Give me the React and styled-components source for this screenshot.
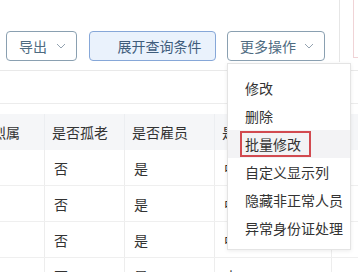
import React from "react";
import styled, { createGlobalStyle } from "styled-components";

const GlobalStyle = createGlobalStyle`
  html, body {
    margin: 0;
    padding: 0;
    background: #fff;
  }
  body {
    font-family: "Noto Sans CJK SC", "Noto Sans", sans-serif;
    font-size: 14px;
    color: #333;
  }
`;

const columns = [
  { title: "是否烈属", width: 88 },
  { title: "是否孤老", width: 80 },
  { title: "是否雇员", width: 90 },
  { title: "是否中共党员", width: 117 },
  { title: "", width: 40 },
];

const rows = [
  ["", "否", "是", "中", ""],
  ["", "否", "是", "中", ""],
  ["", "否", "是", "中", ""],
  ["", "否", "是", "中", ""],
];

const menuItems = [
  "修改",
  "删除",
  "批量修改",
  "自定义显示列",
  "隐藏非正常人员",
  "异常身份证处理",
];

const Chevron = () => (
  <svg width="10" height="6" viewBox="0 0 10 6">
    <path d="M1 1 L5 5 L9 1" fill="none" stroke="#93a2b0" strokeWidth="1" />
  </svg>
);

const App = () => {
  return (
    <Page>
      <GlobalStyle />
      <Toolbar>
        <Button $width={71}>
          导出
          <Chevron />
        </Button>
        <Button $width={127} $primary>
          展开查询条件
        </Button>
        <Button $width={98}>
          更多操作
          <Chevron />
        </Button>
        <Edge>
          <EdgeMark />
        </Edge>
      </Toolbar>
      <Divider />
      <Gap />
      <TableWrap>
        <Table>
          <HeaderRow>
            {columns.map((c, i) => (
              <HeadCell key={i} $width={c.width}>
                {c.title}
              </HeadCell>
            ))}
          </HeaderRow>
          {rows.map((r, ri) => (
            <Row key={ri}>
              {r.map((v, ci) => (
                <Cell key={ci} $width={columns[ci].width}>
                  {v}
                </Cell>
              ))}
            </Row>
          ))}
        </Table>
        <Menu>
          {menuItems.map((m, i) => (
            <MenuItem key={i} $active={i === 2}>
              {i === 2 ? <Marked>{m}</Marked> : m}
            </MenuItem>
          ))}
        </Menu>
      </TableWrap>
    </Page>
  );
};

export default App;

const Page = styled.div`
  width: 358px;
  height: 272px;
  overflow: hidden;
  position: relative;
  background: #fff;
`;

const Toolbar = styled.div`
  display: flex;
  align-items: flex-start;
  height: 70px;
  padding: 31px 0 0 6px;
  box-sizing: border-box;
  gap: 12px;
`;

const Button = styled.div`
  width: ${(p) => p.$width}px;
  height: 30px;
  box-sizing: border-box;
  border: 1px solid ${(p) => (p.$primary ? "#86a7d8" : "#8aa0b1")};
  background: ${(p) => (p.$primary ? "#eaf2fc" : "#fff")};
  border-radius: 4px;
  display: flex;
  align-items: center;
  justify-content: ${(p) => (p.$primary ? "center" : "space-between")};
  padding: ${(p) => (p.$primary ? "0 0 0 14px" : "0 10px 0 12px")};
  color: ${(p) => (p.$primary ? "#3f5d7c" : "#4e6b81")};
  font-size: 14px;
  line-height: 1;
  &:nth-child(3) {
    margin-left: -1px;
  }
`;

const Edge = styled.div`
  margin-left: auto;
  margin-top: -31px;
  width: 19px;
  height: 62px;
  border-left: 1px solid #e6e6e6;
  box-sizing: border-box;
  display: flex;
`;

const EdgeMark = styled.div`
  margin-left: 13px;
  width: 6px;
  height: 57px;
  border-left: 1px solid #f0d3d6;
  border-bottom: 1px solid #f0d3d6;
`;

const Divider = styled.div`
  height: 1px;
  background: #e9e9e9;
`;

const Gap = styled.div`
  height: 32px;
  border-bottom: 1px solid #ececec;
`;

const TableWrap = styled.div`
  position: relative;
  padding-top: 10px;
`;

const Table = styled.div`
  margin-left: -43px;
  display: flex;
  flex-direction: column;
`;

const HeaderRow = styled.div`
  display: flex;
  height: 36px;
  background: #f5f6f8;
`;

const HeadCell = styled.div`
  width: ${(p) => p.$width}px;
  flex-shrink: 0;
  box-sizing: border-box;
  padding-left: 7px;
  display: flex;
  align-items: center;
  border-right: 1px solid #eceef1;
  white-space: nowrap;
  overflow: hidden;
  color: #333;
`;

const Row = styled.div`
  display: flex;
  height: 36px;
  border-bottom: 1px solid #efefef;
  box-sizing: border-box;
`;

const Cell = styled.div`
  width: ${(p) => p.$width}px;
  flex-shrink: 0;
  box-sizing: border-box;
  padding-left: 9px;
  display: flex;
  align-items: center;
  border-right: 1px solid #ededed;
  white-space: nowrap;
  overflow: hidden;
  color: #333;
`;

const Menu = styled.div`
  position: absolute;
  left: 227px;
  top: -41px;
  width: 124px;
  box-sizing: border-box;
  padding: 10px 0 7px;
  background: #fff;
  border: 1px solid #e4e4e4;
  box-shadow: 0 1px 4px rgba(0, 0, 0, 0.08);
`;

const MenuItem = styled.div`
  height: 28px;
  display: flex;
  align-items: center;
  padding-left: 17px;
  background: ${(p) => (p.$active ? "#f3f3f5" : "transparent")};
  color: #333;
  white-space: nowrap;
`;

const Marked = styled.span`
  display: inline-flex;
  align-items: center;
  height: 26px;
  box-sizing: border-box;
  margin-left: -5px;
  padding: 0 8px 0 3px;
  border: 2px solid #d24a50;
`;
